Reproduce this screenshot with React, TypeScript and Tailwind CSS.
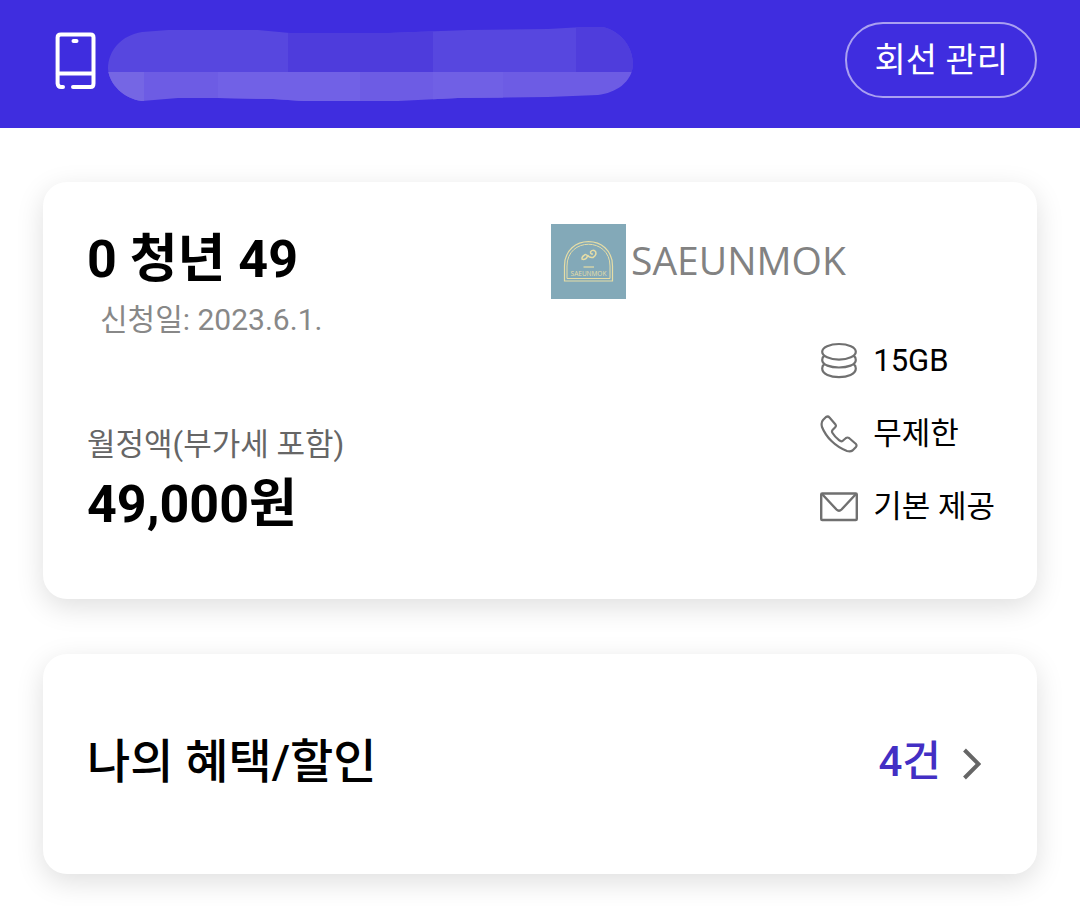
import type { ReactNode } from "react";

function PhoneDeviceIcon() {
  return (
    <svg aria-hidden="true" className="h-19 w-[42px] shrink-0" viewBox="0 0 42 76" fill="none" stroke="#fff" strokeWidth="4" strokeLinecap="round">
      <path d="M8 65H6Q3 65 2.600 61.500V15.500Q2.600 12.500 6 12.500H35.500Q38.500 12.500 38.500 15.500V61.500Q38.500 65 35.500 65H18" />
      <path d="M3 51.500H38" />
      <path d="M18.500 19H21.500" />
    </svg>
  );
}

function HiddenNumber() {
  return (
    <svg aria-hidden="true" className="h-20 min-w-0 shrink" width="526" viewBox="0 0 526 80">
      <defs>
        <clipPath id="blob">
          <path d="M34 10L60 8H150L182 11H280L360 8L440 7L475 5H495C514 10 525 25 525 43C524 60 508 71 490 73L440 75L350 76L290 79H195L165 77L110 76H70L34 79C16 77 1 62 0 47C0 28 14 13 34 10Z" />
        </clipPath>
      </defs>
      <g clipPath="url(#blob)">
        <rect width="526" height="50" fill="#5747df" />
        <rect x="180" width="145" height="50" fill="#4e3cdc" />
        <rect x="468" width="58" height="50" fill="#4f3ddc" />
        <rect y="50" width="526" height="30" fill="#6d5ce4" />
        <rect y="50" width="36" height="30" fill="#7566e4" />
        <rect x="110" y="50" width="142" height="30" fill="#7161e6" />
        <rect x="325" y="50" width="70" height="30" fill="#7060e5" />
      </g>
    </svg>
  );
}

function Emblem() {
  return (
    <svg aria-hidden="true" className="size-[75px] shrink-0" viewBox="0 0 75 75" fill="none" stroke="#e6dda6">
      <rect width="75" height="75" fill="#83a9b8" stroke="none" />
      <path d="M13.500 57V42C13.500 9.500 61.500 9.500 61.500 42V57Z" strokeWidth="1.200" />
      <path d="M16 54.500V42C16 13 59 13 59 42V54.500Z" strokeWidth="1" />
      <path d="M31.500 36Q30 33 33 31.500Q35 29.500 36.500 32Q35.500 35.500 32 35.500M36.500 31Q38 34 42 33.500Q46 31 44.500 27.500Q41.500 25 39.500 28Q39.500 30.500 42 30" strokeWidth="1.500" />
      <path d="M32.500 43H43" strokeWidth="1.200" />
      <text x="37.500" y="52" textAnchor="middle" fontSize="6.500" fontFamily="Open Sans, sans-serif" fill="#e6dda6" stroke="none">
        SAEUNMOK
      </text>
    </svg>
  );
}

const iconClass = "size-[38px] shrink-0";

function DataIcon() {
  return (
    <svg aria-hidden="true" className={iconClass} viewBox="0 0 38 38" fill="none" stroke="#707070" strokeWidth="2.200" strokeLinecap="round">
      <ellipse cx="19" cy="9.800" rx="16.800" ry="7.800" />
      <path d="M4 14C2.500 15 2.200 16.500 2.200 18C2.200 28 35.800 28 35.800 18C35.800 16.500 35.500 15 34 14" />
      <path d="M4 22.500C2.500 23.500 2.200 25 2.200 26.500C2.200 38 35.800 38 35.800 26.500C35.800 25 35.500 23.500 34 22.500" />
    </svg>
  );
}

function CallIcon() {
  return (
    <svg aria-hidden="true" className={iconClass} viewBox="0 0 38 38" fill="none" stroke="#707070" strokeWidth="2.200" strokeLinejoin="round">
      <path d="M3 5L6 2Q8 0.800 9.500 2.500L15.500 9.500Q16.500 11 15 12.500L12.500 15Q11.500 16.500 12.500 18Q15 22 19 25.200Q21 26.800 22.500 26L26 23Q27.500 22 29 23L36 29Q37 30.500 36 32L32.500 35.500Q30.500 37 27 36C15 31.500 6 22 2 12Q0.800 7.500 3 5Z" />
    </svg>
  );
}

function MailIcon() {
  return (
    <svg aria-hidden="true" className={iconClass} viewBox="0 0 38 38" fill="none" stroke="#707070" strokeWidth="2.400" strokeLinejoin="round">
      <rect x="1.200" y="5.500" width="35.600" height="26.500" rx="1" />
      <path d="M2 6L16.500 21.500Q19 24 21.500 21.500L36 6" />
    </svg>
  );
}

function Allowance({ icon, children }: { icon: ReactNode; children: ReactNode }) {
  return (
    <li className="flex items-center gap-[15px] whitespace-nowrap">
      {icon}
      <span>{children}</span>
    </li>
  );
}

const cardClass = "rounded-3xl bg-white pr-[42px] pl-11 shadow-[0_8px_28px_rgba(0,0,0,0.13)]";

export default function App() {
  return (
    <div className="min-h-screen bg-white pb-8 font-['Roboto','Noto_Sans_CJK_KR',sans-serif] text-black" lang="ko">
      <header className="flex items-start bg-[#3f2ddf] pt-[22px] pr-[43px] pb-[26px] pl-[55px]">
        <PhoneDeviceIcon />
        <div className="ml-[11px] flex min-w-0">
          <HiddenNumber />
        </div>
        <button type="button" className="ml-auto h-19 shrink-0 rounded-full border-2 border-[#aaa0f1] px-[27px] text-[34px] leading-[68px] whitespace-nowrap text-white">
          회선 관리
        </button>
      </header>

      <main className="flex flex-col gap-[55px] px-[43px] pt-[54px]">
        <section className={`${cardClass} grid grid-cols-2 gap-5 pt-[42px] pb-[60px]`}>
          <div className="pt-[2px]">
            <h1 className="text-[52px] leading-[68px] font-bold">0 청년 49</h1>
            <p className="pl-[13px] text-[30px] leading-[52px] text-[#888]">신청일: 2023.6.1.</p>
            <p className="mt-[73px] text-[31px] leading-[52px] text-[#666]">월정액(부가세 포함)</p>
            <p className="text-[52px] leading-[68px] font-bold">49,000원</p>
          </div>
          <div className="flex flex-col">
            <div className="flex items-center gap-[5px]">
              <Emblem />
              <span className="pb-[3px] font-['Open_Sans',sans-serif] text-[39px] leading-[48px] text-[#828282]">SAEUNMOK</span>
            </div>
            <ul className="mt-[43px] flex flex-col gap-[35px] self-end text-[31px] leading-[38px]">
              <Allowance icon={<DataIcon />}>15GB</Allowance>
              <Allowance icon={<CallIcon />}>무제한</Allowance>
              <Allowance icon={<MailIcon />}>기본 제공</Allowance>
            </ul>
          </div>
        </section>

        <a href="#benefits" className={`${cardClass} flex items-center justify-between pt-[73px] pb-[77px]`}>
          <h2 className="text-[47px] leading-[70px] font-medium">나의 혜택/할인</h2>
          <span className="flex items-center gap-[22px] pr-[14px] text-[42px] leading-[70px] font-medium text-[#432fc4]">
            4건
            <svg aria-hidden="true" className="h-9 w-[18px]" viewBox="0 0 18 36" fill="none" stroke="#666" strokeWidth="4">
              <path d="M1.500 6L15.500 20L1.500 34" />
            </svg>
          </span>
        </a>
      </main>
    </div>
  );
}
